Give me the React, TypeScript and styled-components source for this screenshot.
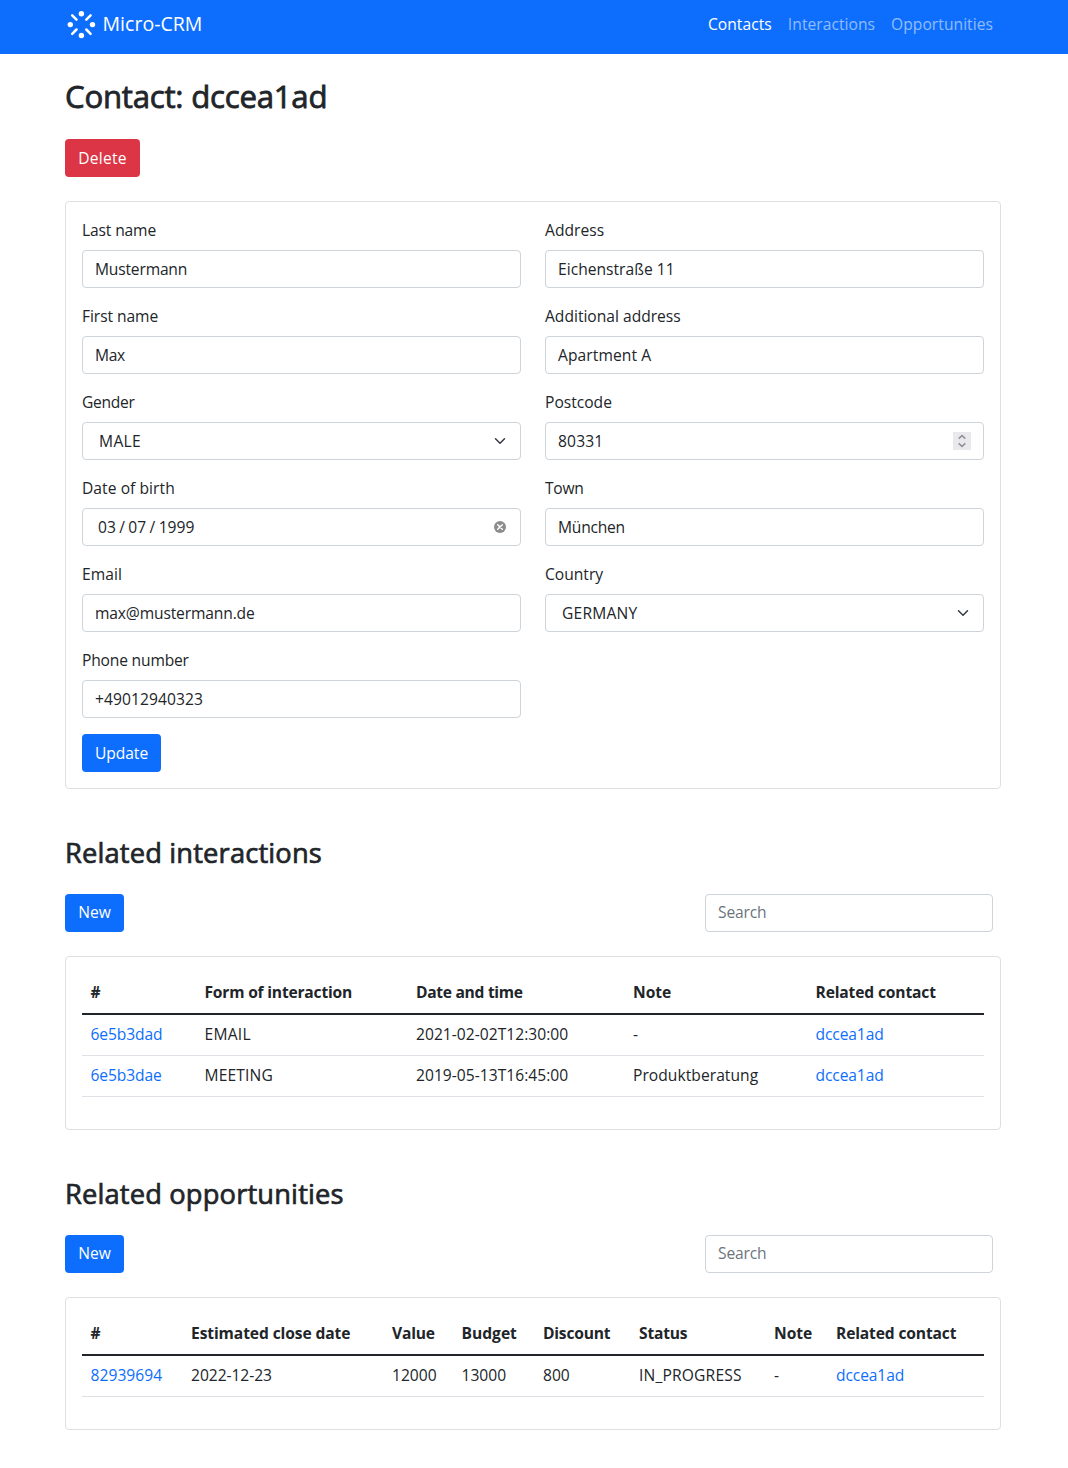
import React from "react";
import styled, { createGlobalStyle } from "styled-components";

const GlobalStyle = createGlobalStyle`
  *, *::before, *::after { box-sizing: border-box; }
  body {
    margin: 0;
    background: #fff;
    color: #212529;
    font-family: "Open Sans", "Noto Sans", sans-serif;
    font-size: 15.6px;
    line-height: 24px;
  }
`;

const Text = styled.span<{ $track?: number }>`
  letter-spacing: ${(p) => p.$track ?? 0}px;
  white-space: nowrap;
`;

const Navbar = styled.header`
  height: 54px;
  padding: 8px 75px 0 66px;
  display: flex;
  justify-content: space-between;
  align-items: flex-start;
  background: #0d6efd;
`;

const Brand = styled.a`
  display: flex;
  align-items: flex-start;
  gap: 5.5px;
  color: #fff;
  font-size: 19.5px;
  line-height: 31px;
`;

const Logo = styled.svg`
  display: block;
  width: 31px;
  height: 33px;
`;

const Nav = styled.nav`
  display: flex;
  gap: 16px;
  padding-top: 4px;
`;

const NavLink = styled.a<{ $active?: boolean }>`
  color: ${(p) => (p.$active ? "#fff" : "rgba(255, 255, 255, 0.55)")};
`;

const Main = styled.main`
  width: 936px;
  margin-left: 65px;
  padding-top: 23px;
`;

const PageTitle = styled.h1`
  margin: 0 0 24px;
  font-size: 31.2px;
  line-height: 38px;
  font-weight: 500;
  -webkit-text-stroke: 0.8px currentColor;
`;

const SectionTitle = styled.h2`
  margin: 47px 0 24px;
  font-size: 27.3px;
  line-height: 34px;
  font-weight: 500;
  -webkit-text-stroke: 0.7px currentColor;
`;

const Button = styled.button<{ $tone?: "danger" | "primary"; $compact?: boolean; $width: number }>`
  display: block;
  width: ${(p) => p.$width}px;
  height: 38px;
  padding: ${(p) => (p.$compact ? "7px 0 9px" : "7px 0")};
  border: 0;
  border-radius: 4px;
  background: ${(p) => (p.$tone === "danger" ? "#dc3545" : "#0d6efd")};
  color: #fff;
  font: inherit;
  line-height: ${(p) => (p.$compact ? 22 : 24)}px;
  text-align: center;
`;

const Card = styled.section`
  padding: 16px;
  border: 1px solid #dfdfdf;
  border-radius: 4px;
  background: #fff;
`;

const FormCard = styled(Card)`
  margin-top: 24px;
`;

const FormColumns = styled.div`
  display: grid;
  grid-template-columns: 1fr 1fr;
  column-gap: 24px;
`;

const FormColumn = styled.div`
  display: flex;
  flex-direction: column;
`;

const Field = styled.div`
  margin-bottom: 16px;
`;

const Label = styled.div`
  height: 24px;
  margin-bottom: 8px;
`;

const Control = styled.div<{ $indent?: number }>`
  height: 38px;
  padding: 0 12px 0 ${(p) => p.$indent ?? 12}px;
  display: flex;
  align-items: center;
  justify-content: space-between;
  border: 1px solid #ced4da;
  border-radius: 4px;
`;

const DateParts = styled.span`
  display: flex;
  gap: 3.4px;
`;

const ControlIcon = styled.svg`
  display: block;
  flex: none;
`;

const Toolbar = styled.div`
  display: flex;
  justify-content: space-between;
  margin-bottom: 24px;
  padding-right: 8px;
`;

const SearchBox = styled.div`
  width: 288px;
  height: 38px;
  padding: 6px 12px 8px;
  border: 1px solid #ced4da;
  border-radius: 4px;
  color: #6c757d;
  line-height: 22px;
`;

const Table = styled.table`
  width: 902px;
  margin-bottom: 16px;
  table-layout: fixed;
  border-collapse: separate;
  border-spacing: 0;
  line-height: 22px;
`;

const Col = styled.col<{ $width?: number }>`
  width: ${(p) => (p.$width ? `${p.$width}px` : "auto")};
`;

const HeadCell = styled.th`
  height: 42px;
  padding: 8px 0 10px 8.5px;
  border-bottom: 2px solid #212529;
  font-weight: 700;
  text-align: left;
`;

const Cell = styled.td`
  height: 41px;
  padding: 8px 0 10px 8.5px;
  border-bottom: 1px solid #dee2e6;
`;

const Link = styled.a`
  color: #0d6efd;
`;

type Kind = "text" | "select" | "number" | "date";
type Tracked = [string, number];
interface FieldData {
  label: Tracked;
  value: Tracked;
  kind?: Kind;
}

const personFields: FieldData[] = [
  { label: ["Last name", -0.14], value: ["Mustermann", -0.18] },
  { label: ["First name", -0.07], value: ["Max", -0.35] },
  { label: ["Gender", -0.3], value: ["MALE", 0.35], kind: "select" },
  { label: ["Date of birth", 0.06], value: ["03/07/1999", 0], kind: "date" },
  { label: ["Email", 0.1], value: ["max@mustermann.de", -0.14] },
  { label: ["Phone number", -0.18], value: ["+49012940323", 0.08] },
];

const addressFields: FieldData[] = [
  { label: ["Address", 0.03], value: ["Eichenstraße 11", 0.02] },
  { label: ["Additional address", 0], value: ["Apartment A", 0.08] },
  { label: ["Postcode", 0], value: ["80331", 0.15], kind: "number" },
  { label: ["Town", -0.27], value: ["München", -0.22] },
  { label: ["Country", 0], value: ["GERMANY", 0.2], kind: "select" },
];

interface Column {
  title: Tracked;
  width?: number;
  link?: boolean;
}

const interactionColumns: Column[] = [
  { title: ["#", 0], width: 114, link: true },
  { title: ["Form of interaction", -0.2], width: 211.5 },
  { title: ["Date and time", -0.3], width: 217 },
  { title: ["Note", 0], width: 182.5 },
  { title: ["Related contact", -0.14], link: true },
];

const interactionRows: Tracked[][] = [
  [["6e5b3dad", -0.11], ["EMAIL", 0.25], ["2021-02-02T12:30:00", 0.03], ["-", 0], ["dccea1ad", -0.11]],
  [["6e5b3dae", -0.11], ["MEETING", 0.15], ["2019-05-13T16:45:00", 0.03], ["Produktberatung", 0.05], ["dccea1ad", -0.11]],
];

const opportunityColumns: Column[] = [
  { title: ["#", 0], width: 100.5, link: true },
  { title: ["Estimated close date", -0.1], width: 201 },
  { title: ["Value", -0.2], width: 69.5 },
  { title: ["Budget", 0], width: 81.5 },
  { title: ["Discount", -0.22], width: 96 },
  { title: ["Status", -0.2], width: 135 },
  { title: ["Note", 0], width: 62 },
  { title: ["Related contact", -0.14], link: true },
];

const opportunityRows: Tracked[][] = [
  [["82939694", 0.05], ["2022-12-23", -0.04], ["12000", 0], ["13000", 0], ["800", 0], ["IN_PROGRESS", 0.17], ["-", 0], ["dccea1ad", -0.11]],
];

function BrandMark() {
  return (
    <Logo viewBox="0 0 31 33">
      <g fill="#fff">
        <circle cx="15.4" cy="5.7" r="2.7" />
        <circle cx="26.5" cy="16.6" r="2.7" />
        <circle cx="15.4" cy="27.5" r="2.7" />
        <circle cx="4.3" cy="16.6" r="2.7" />
      </g>
      <path
        d="M20.3 11.7 24.6 7.4M10.5 11.7 6.2 7.4M20.3 21.5 24.6 25.8M10.5 21.5 6.2 25.8"
        stroke="#fff"
        strokeWidth="2.5"
        strokeLinecap="round"
      />
    </Logo>
  );
}

function Chevron() {
  return (
    <ControlIcon width="16" height="12" viewBox="-2.67 0 21.33 16">
      <path d="M2 5l6 6 6-6" fill="none" stroke="#343a40" strokeWidth="2" strokeLinecap="round" strokeLinejoin="round" />
    </ControlIcon>
  );
}

function Stepper() {
  return (
    <ControlIcon width="18" height="18" viewBox="0 0 18 18">
      <rect width="18" height="18" fill="#e9e9ed" />
      <path d="M5.7 6.6 9 3.6l3.3 3M5.7 11.4 9 14.4l3.3-3" fill="none" stroke="#8f8f9a" strokeWidth="1.5" />
    </ControlIcon>
  );
}

function ClearIcon() {
  return (
    <ControlIcon width="16" height="12" viewBox="0 0 16 12">
      <circle cx="8" cy="6" r="6" fill="#8c8c8e" />
      <path d="M5.7 3.7l4.6 4.6M10.3 3.7 5.7 8.3" stroke="#fff" strokeWidth="1.5" strokeLinecap="round" />
    </ControlIcon>
  );
}

function FormField({ label, value, kind = "text" }: FieldData) {
  const indent = kind === "select" ? 16 : kind === "date" ? 15 : 12;
  return (
    <Field>
      <Label>
        <Text $track={label[1]}>{label[0]}</Text>
      </Label>
      <Control $indent={indent}>
        {kind === "date" ? (
          <DateParts>
            {value[0].split("/").map((part, i) => (
              <React.Fragment key={part}>
                {i > 0 && <span>/</span>}
                <span>{part}</span>
              </React.Fragment>
            ))}
          </DateParts>
        ) : (
          <Text $track={value[1]}>{value[0]}</Text>
        )}
        {kind === "select" && <Chevron />}
        {kind === "number" && <Stepper />}
        {kind === "date" && <ClearIcon />}
      </Control>
    </Field>
  );
}

function DataTable({ columns, rows }: { columns: Column[]; rows: Tracked[][] }) {
  return (
    <Card>
      <Table>
        <colgroup>
          {columns.map((c) => (
            <Col key={c.title[0]} $width={c.width} />
          ))}
        </colgroup>
        <thead>
          <tr>
            {columns.map((c) => (
              <HeadCell key={c.title[0]}>
                <Text $track={c.title[1]}>{c.title[0]}</Text>
              </HeadCell>
            ))}
          </tr>
        </thead>
        <tbody>
          {rows.map((row) => (
            <tr key={row[0][0]}>
              {row.map(([text, track], i) => (
                <Cell key={i}>
                  <Text as={columns[i].link ? Link : undefined} $track={track}>
                    {text}
                  </Text>
                </Cell>
              ))}
            </tr>
          ))}
        </tbody>
      </Table>
    </Card>
  );
}

function RelatedSection({ title, columns, rows }: { title: string; columns: Column[]; rows: Tracked[][] }) {
  return (
    <>
      <SectionTitle>
        <Text $track={0.15}>{title}</Text>
      </SectionTitle>
      <Toolbar>
        <Button $compact $width={59}>
          <Text $track={-0.1}>New</Text>
        </Button>
        <SearchBox>
          <Text $track={-0.17}>Search</Text>
        </SearchBox>
      </Toolbar>
      <DataTable columns={columns} rows={rows} />
    </>
  );
}

export default function App() {
  return (
    <>
      <GlobalStyle />
      <Navbar>
        <Brand>
          <BrandMark />
          <Text $track={0.03}>Micro-CRM</Text>
        </Brand>
        <Nav>
          <NavLink $active>
            <Text $track={0.06}>Contacts</Text>
          </NavLink>
          <NavLink>
            <Text $track={0.05}>Interactions</Text>
          </NavLink>
          <NavLink>
            <Text $track={0.05}>Opportunities</Text>
          </NavLink>
        </Nav>
      </Navbar>
      <Main>
        <PageTitle>
          <Text $track={-0.24}>Contact: dccea1ad</Text>
        </PageTitle>
        <Button $tone="danger" $width={75}>
          <Text $track={0.25}>Delete</Text>
        </Button>
        <FormCard>
          <FormColumns>
            <FormColumn>
              {personFields.map((f) => (
                <FormField key={f.label[0]} {...f} />
              ))}
            </FormColumn>
            <FormColumn>
              {addressFields.map((f) => (
                <FormField key={f.label[0]} {...f} />
              ))}
            </FormColumn>
          </FormColumns>
          <Button $width={79}>
            <Text $track={-0.03}>Update</Text>
          </Button>
        </FormCard>
        <RelatedSection title="Related interactions" columns={interactionColumns} rows={interactionRows} />
        <RelatedSection title="Related opportunities" columns={opportunityColumns} rows={opportunityRows} />
      </Main>
    </>
  );
}
